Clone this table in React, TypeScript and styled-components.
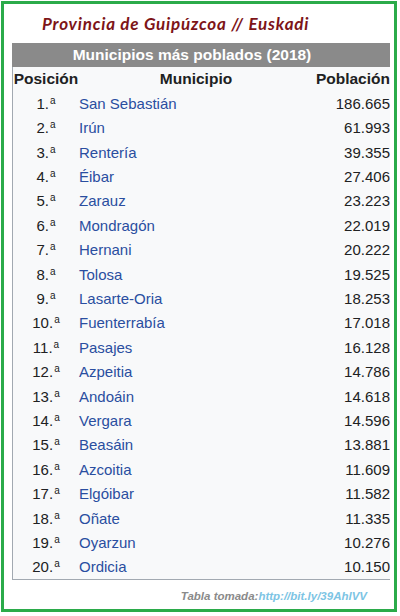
import React from "react";
import styled, { createGlobalStyle } from "styled-components";

const Global = createGlobalStyle`
  html, body { margin: 0; padding: 0; background: #ffffff; }
  body { font-family: "Liberation Sans", Arial, sans-serif; }
`;

const Frame = styled.div`
  box-sizing: border-box;
  margin: 1px 0 0 1px;
  width: 396px;
  height: 611px;
  border: 3px solid #2bab4a;
  background: #ffffff;
  display: flex;
  flex-direction: column;
`;

const Title = styled.div`
  height: 39px;
  display: flex;
  align-items: center;
  padding-left: 38px;
  font-family: "Lato", "DejaVu Sans", sans-serif;
  font-style: italic;
  font-weight: bold;
  font-size: 17px;
  color: #7d1418;
  letter-spacing: 0.8px;
`;

const Table = styled.div`
  margin-left: 8px;
  width: 377px;
  border-left: 1px solid #a2a9b1;
  border-bottom: 1px solid #a2a9b1;
  background: #f8f9fa;
  color: #202122;
  font-size: 15px;
`;

const Caption = styled.div`
  height: 24px;
  margin-left: -1px;
  background: #8a8a8a;
  color: #ffffff;
  font-weight: bold;
  font-size: 15.5px;
  display: flex;
  align-items: center;
  justify-content: center;
  padding-right: 18px;
`;

const Row = styled.div<{ $head?: boolean }>`
  display: grid;
  grid-template-columns: 66px 234px 1fr;
  align-items: center;
  height: ${(p) => (p.$head ? "24px" : "24.42px")};
  font-weight: ${(p) => (p.$head ? "bold" : "normal")};
  font-size: ${(p) => (p.$head ? "15.5px" : "15px")};
`;

const Pos = styled.div`
  text-align: center;
  white-space: nowrap;
`;

const Name = styled.div<{ $head?: boolean }>`
  text-align: ${(p) => (p.$head ? "center" : "left")};
  color: ${(p) => (p.$head ? "#202122" : "#2a4ea0")};
  white-space: nowrap;
`;

const Pop = styled.div`
  text-align: right;
  white-space: nowrap;
`;

const Sup = styled.sup`
  font-size: 10px;
  vertical-align: 5px;
  line-height: 0;
  margin-left: 1px;
`;

const Footer = styled.div`
  margin-top: 10px;
  padding-right: 27px;
  text-align: right;
  font-size: 11.5px;
  font-weight: bold;
  font-style: italic;
  color: #8a8a8a;
`;

const Link = styled.span`
  color: #7cc4e4;
`;

const data: [string, string][] = [
  ["San Sebastián", "186.665"],
  ["Irún", "61.993"],
  ["Rentería", "39.355"],
  ["Éibar", "27.406"],
  ["Zarauz", "23.223"],
  ["Mondragón", "22.019"],
  ["Hernani", "20.222"],
  ["Tolosa", "19.525"],
  ["Lasarte-Oria", "18.253"],
  ["Fuenterrabía", "17.018"],
  ["Pasajes", "16.128"],
  ["Azpeitia", "14.786"],
  ["Andoáin", "14.618"],
  ["Vergara", "14.596"],
  ["Beasáin", "13.881"],
  ["Azcoitia", "11.609"],
  ["Elgóibar", "11.582"],
  ["Oñate", "11.335"],
  ["Oyarzun", "10.276"],
  ["Ordicia", "10.150"],
];

export default function App() {
  return (
    <>
      <Global />
      <Frame>
        <Title>Provincia de Guipúzcoa // Euskadi</Title>
        <Table>
          <Caption>Municipios más poblados (2018)</Caption>
          <Row $head>
            <Pos>Posición</Pos>
            <Name $head>Municipio</Name>
            <Pop>Población</Pop>
          </Row>
          {data.map(([name, pop], i) => (
            <Row key={name}>
              <Pos>
                {i + 1}.<Sup>a</Sup>
              </Pos>
              <Name>{name}</Name>
              <Pop>{pop}</Pop>
            </Row>
          ))}
        </Table>
        <Footer>
          Tabla tomada:<Link>http://bit.ly/39AhlVV</Link>
        </Footer>
      </Frame>
    </>
  );
}
